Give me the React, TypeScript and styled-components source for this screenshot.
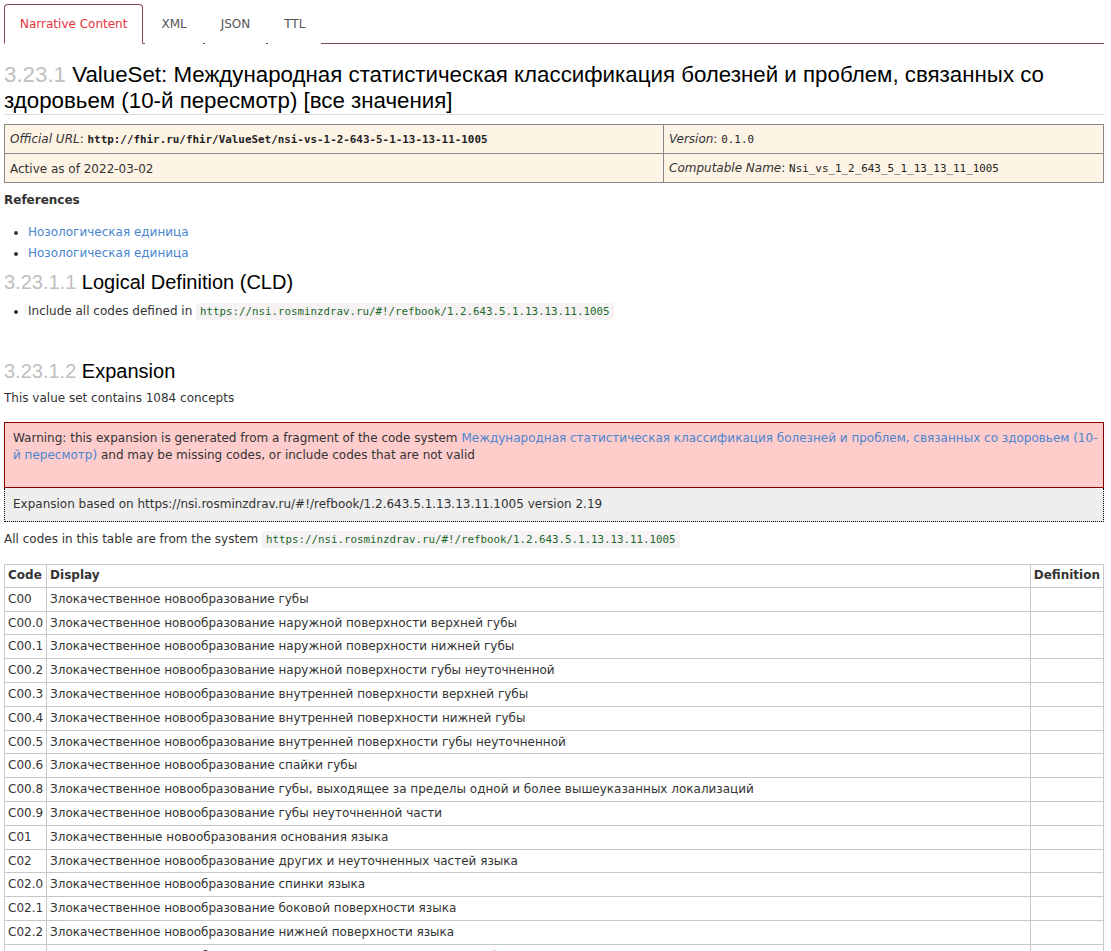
import React from "react";
import styled, { createGlobalStyle } from "styled-components";

const Global = createGlobalStyle`
  html, body { margin: 0; padding: 0; background: #fff; }
  body {
    font-family: "DejaVu Sans", Verdana, sans-serif;
    font-size: 12px;
    color: #333;
  }
`;

const Page = styled.div`
  padding: 4px 7px 0 4px;
`;

const Tabs = styled.ul`
  display: flex;
  list-style: none;
  margin: 0;
  padding: 0;
  border-bottom: 1px solid #8c4a4f;
`;

const Tab = styled.li<{ $active?: boolean }>`
  margin-right: 2px;
  margin-bottom: -1px;
  padding: 11px 15px 10px;
  line-height: 17px;
  font-size: 12px;
  color: ${(p) => (p.$active ? "#e8333d" : "#555")};
  background: #fff;
  border: 1px solid ${(p) => (p.$active ? "#8c4a4f" : "transparent")};
  border-bottom-color: ${(p) => (p.$active ? "#fff" : "transparent")};
  border-radius: 4px 4px 0 0;
`;

const Title = styled.h2`
  font-family: "Liberation Sans", Arial, sans-serif;
  font-weight: normal;
  font-size: 22.3px;
  line-height: 26px;
  color: #000;
  margin: 18px 0 0;
  padding-bottom: 0;
  border-bottom: 1px solid #ddd;
`;

const SubTitle = styled.h3<{ $mt: number }>`
  font-family: "Liberation Sans", Arial, sans-serif;
  font-weight: normal;
  font-size: 20px;
  line-height: 24px;
  color: #000;
  margin: ${(p) => p.$mt}px 0 0;
`;

const Num = styled.span`
  color: #c0c0c0;
`;

const Grid = styled.table`
  width: 100%;
  border-collapse: collapse;
  margin-top: 9px;
  background: #fef4e6;
  td {
    border: 1px solid #888;
    padding: 6px 5px 5px;
    line-height: 16px;
    vertical-align: middle;
  }
`;

const Label = styled.i``;

const Mono = styled.span<{ $bold?: boolean }>`
  font-family: "DejaVu Sans Mono", "Liberation Mono", monospace;
  font-size: 10.9px;
  line-height: 16px;
  font-weight: ${(p) => (p.$bold ? "bold" : "normal")};
  color: #222;
`;

const Heading = styled.p`
  font-weight: bold;
  margin: 9px 0 0;
  line-height: 17px;
`;

const Bullets = styled.ul<{ $mt: number }>`
  margin: ${(p) => p.$mt}px 0 0;
  padding-left: 24px;
  li {
    line-height: 17px;
    padding: 2px 0;
  }
`;

const Link = styled.a`
  color: #4a86cf;
  text-decoration: none;
`;

const Code = styled.code`
  font-family: "DejaVu Sans Mono", "Liberation Mono", monospace;
  font-size: 10.8px;
  color: #1a6b2b;
  background: #f7f2f4;
  border-radius: 3px;
  padding: 2px 4px;
`;

const Para = styled.p<{ $mt: number }>`
  margin: ${(p) => p.$mt}px 0 0;
  line-height: 17px;
`;

const Warning = styled.div`
  margin-top: 15px;
  background: #ffcccc;
  border: 1px solid #8b0000;
  padding: 7px 4px 23px 8px;
  line-height: 17px;
`;

const Based = styled.div`
  background: #eeeeee;
  border: 1px dotted #000;
  border-top: none;
  padding: 8px 8px 8px;
  line-height: 17px;
`;

const Codes = styled.table`
  width: 100%;
  border-collapse: collapse;
  margin-top: 16px;
  th, td {
    border: 1px solid #c8c8c8;
    padding: 3px 3px;
    line-height: 16.8px;
    text-align: left;
    vertical-align: top;
  }
  th {
    font-weight: bold;
    line-height: 15.8px;
  }
`;

const NarrowHead = styled.th`
  width: 1%;
  white-space: nowrap;
`;

const rows: [string, string][] = [
  ["C00", "Злокачественное новообразование губы"],
  ["C00.0", "Злокачественное новообразование наружной поверхности верхней губы"],
  ["C00.1", "Злокачественное новообразование наружной поверхности нижней губы"],
  ["C00.2", "Злокачественное новообразование наружной поверхности губы неуточненной"],
  ["C00.3", "Злокачественное новообразование внутренней поверхности верхней губы"],
  ["C00.4", "Злокачественное новообразование внутренней поверхности нижней губы"],
  ["C00.5", "Злокачественное новообразование внутренней поверхности губы неуточненной"],
  ["C00.6", "Злокачественное новообразование спайки губы"],
  ["C00.8", "Злокачественное новообразование губы, выходящее за пределы одной и более вышеуказанных локализаций"],
  ["C00.9", "Злокачественное новообразование губы неуточненной части"],
  ["C01", "Злокачественные новообразования основания языка"],
  ["C02", "Злокачественное новообразование других и неуточненных частей языка"],
  ["C02.0", "Злокачественное новообразование спинки языка"],
  ["C02.1", "Злокачественное новообразование боковой поверхности языка"],
  ["C02.2", "Злокачественное новообразование нижней поверхности языка"],
  ["C02.3", "Злокачественное новообразование передних 2/3 языка неуточненной части"],
  ["C02.4", "Злокачественное новообразование язычной миндалины"],
];

const URL = "https://nsi.rosminzdrav.ru/#!/refbook/1.2.643.5.1.13.13.11.1005";

export default function App() {
  return (
    <Page>
      <Global />
      <Tabs>
        <Tab $active>Narrative Content</Tab>
        <Tab>XML</Tab>
        <Tab>JSON</Tab>
        <Tab>TTL</Tab>
      </Tabs>
      <Title>
        <Num>3.23.1</Num> ValueSet: Международная статистическая классификация болезней и проблем, связанных со
        здоровьем (10-й пересмотр) [все значения]
      </Title>
      <Grid>
        <tbody>
          <tr>
            <td>
              <Label>Official URL</Label>: <Mono $bold>http://fhir.ru/fhir/ValueSet/nsi-vs-1-2-643-5-1-13-13-11-1005</Mono>
            </td>
            <td style={{ width: 429 }}>
              <Label>Version</Label>: <Mono>0.1.0</Mono>
            </td>
          </tr>
          <tr>
            <td>Active as of 2022-03-02</td>
            <td>
              <Label>Computable Name</Label>: <Mono>Nsi_vs_1_2_643_5_1_13_13_11_1005</Mono>
            </td>
          </tr>
        </tbody>
      </Grid>
      <Heading>References</Heading>
      <Bullets $mt={13}>
        <li><Link>Нозологическая единица</Link></li>
        <li><Link>Нозологическая единица</Link></li>
      </Bullets>
      <SubTitle $mt={6}>
        <Num>3.23.1.1</Num> Logical Definition (CLD)
      </SubTitle>
      <Bullets $mt={7}>
        <li>
          Include all codes defined in <Code>{URL}</Code>
        </li>
      </Bullets>
      <SubTitle $mt={37}>
        <Num>3.23.1.2</Num> Expansion
      </SubTitle>
      <Para $mt={7}>This value set contains 1084 concepts</Para>
      <Warning>
        Warning: this expansion is generated from a fragment of the code system{" "}
        <Link>Международная статистическая классификация болезней и проблем, связанных со здоровьем (10-й пересмотр)</Link>{" "}
        and may be missing codes, or include codes that are not valid
      </Warning>
      <Based>Expansion based on {URL} version 2.19</Based>
      <Para $mt={9}>
        All codes in this table are from the system <Code>{URL}</Code>
      </Para>
      <Codes>
        <thead>
          <tr>
            <NarrowHead>Code</NarrowHead>
            <th>Display</th>
            <NarrowHead>Definition</NarrowHead>
          </tr>
        </thead>
        <tbody>
          {rows.map(([c, d]) => (
            <tr key={c}>
              <td>{c}</td>
              <td>{d}</td>
              <td></td>
            </tr>
          ))}
        </tbody>
      </Codes>
    </Page>
  );
}
